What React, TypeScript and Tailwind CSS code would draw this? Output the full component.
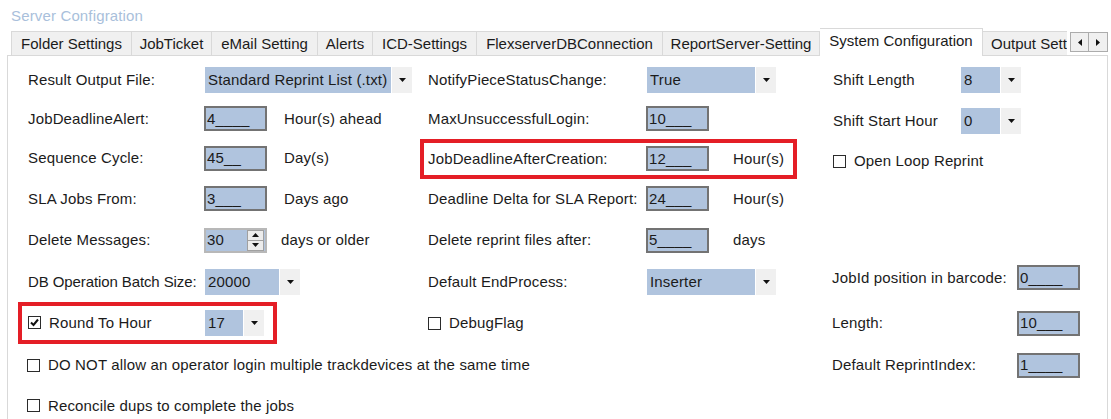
import React from "react";

const txt = "text-[15px] leading-[18px] tracking-[0.15px] text-[#1b1b1b] whitespace-nowrap";

function Tri() {
  return (
    <svg width="7" height="4" viewBox="0 0 7 4">
      <path d="M0 0h7L3.5 4z" fill="#111" />
    </svg>
  );
}

function Box({ v }: { v: string }) {
  return (
    <div className="w-[63px] h-[25px] shrink-0 border-2 border-[#737373] bg-[#b0c4de] flex items-center pl-[1px]">
      <span className={txt}>{v}</span>
    </div>
  );
}

function Combo({ v, w }: { v: string; w: string }) {
  return (
    <div className="flex h-[26px] shrink-0 gap-[1px]">
      <div className={`${w} bg-[#b0c4de] flex items-center pl-[3px]`}>
        <span className={txt}>{v}</span>
      </div>
      <div className="w-[20px] bg-[#f0f0f0] flex items-center justify-center">
        <Tri />
      </div>
    </div>
  );
}

function Check({ checked }: { checked?: boolean }) {
  return (
    <div className="w-[13px] h-[13px] border border-[#2b2b2b] bg-white flex items-center justify-center shrink-0">
      {checked && (
        <svg width="9" height="9" viewBox="0 0 9 9">
          <path d="M1 4.5 L3.5 7 L8 1.5" stroke="#111" strokeWidth="2" fill="none" />
        </svg>
      )}
    </div>
  );
}

function Label({ t, w }: { t: string; w: string }) {
  return <div className={`${w} shrink-0 ${txt}`}>{t}</div>;
}

function Spinner() {
  return (
    <div className="w-[63px] h-[25px] shrink-0 border-2 border-[#b8b8b8] bg-[#b0c4de] flex items-center pl-[1px] justify-between">
      <span className={txt}>30</span>
      <div className="w-[17px] h-[21px] mr-[1px] border border-[#a0a0a0] bg-[#ececec] flex flex-col">
        <div className="flex-1 flex items-center justify-center border-b border-[#a0a0a0]">
          <svg width="7" height="4" viewBox="0 0 7 4">
            <path d="M0 4h7L3.5 0z" fill="#111" />
          </svg>
        </div>
        <div className="flex-1 flex items-center justify-center">
          <Tri />
        </div>
      </div>
    </div>
  );
}

function CheckRow({ t, checked }: { t: string; checked?: boolean }) {
  return (
    <div className="flex items-center gap-[8px]">
      <Check checked={checked} />
      <span className={txt}>{t}</span>
    </div>
  );
}

const tabs: { t: string; w: string }[] = [
  { t: "Folder Settings", w: "w-[121px]" },
  { t: "JobTicket", w: "w-[80px]" },
  { t: "eMail Setting", w: "w-[106px]" },
  { t: "Alerts", w: "w-[55px]" },
  { t: "ICD-Settings", w: "w-[104px]" },
  { t: "FlexserverDBConnection", w: "w-[186px]" },
  { t: "ReportServer-Setting", w: "w-[157px]" },
];

export default function App() {
  return (
    <div className="w-[1111px] h-[419px] bg-white overflow-hidden font-['Liberation_Sans',Arial,sans-serif]">
      <div className="h-[28px] pt-[4px] pl-[11px]">
        <span className="text-[15px] leading-[18px] tracking-[0.15px] text-[#a9bfdb]">Server Configration</span>
      </div>
      <div className="flex items-end h-[27px] pl-[11px] relative">
        {tabs.map((tb, i) => (
          <div
            key={tb.t}
            className={`${tb.w} h-[24px] bg-[#f0f0f0] border-t border-r border-[#d9d9d9] ${i === 0 ? "border-l" : ""} flex items-center justify-center`}
          >
            <span className="text-[15px] leading-[18px] text-[#1b1b1b] whitespace-nowrap">{tb.t}</span>
          </div>
        ))}
        <div className="w-[163px] h-[28px] -mb-px relative z-10 bg-white border-t border-r border-[#d9d9d9] flex items-center justify-center pb-[4px]">
          <span className="text-[15px] leading-[18px] text-[#1b1b1b] whitespace-nowrap">System Configuration</span>
        </div>
        <div className="w-[84px] h-[24px] bg-[#f0f0f0] border-t border-[#d9d9d9] flex items-center pl-[8px] overflow-hidden">
          <span className="text-[15px] leading-[18px] text-[#1b1b1b] whitespace-nowrap">Output Sett</span>
        </div>
        <div className="flex self-start mt-[4px] ml-[3px]">
          <div className="w-[19px] h-[20px] bg-[#f0f0f0] border border-[#acacac] flex items-center justify-center">
            <svg width="4" height="7" viewBox="0 0 4 7">
              <path d="M4 0v7L0 3.5z" fill="#111" />
            </svg>
          </div>
          <div className="w-[19px] h-[20px] bg-[#f0f0f0] border border-l-0 border-[#acacac] flex items-center justify-center">
            <svg width="4" height="7" viewBox="0 0 4 7">
              <path d="M0 0v7L4 3.5z" fill="#111" />
            </svg>
          </div>
        </div>
      </div>
      <div className="ml-[7px] w-[1101px] h-[400px] border border-[#d9d9d9] bg-white pl-[20px] pt-[5px]">
        <div className="grid grid-cols-[400px_405px_260px] grid-rows-[38px_39px_40px_41px_42px_41px_42px_42px_39px]">
          {/* Row 1 */}
          <div className="flex items-center">
            <Label t="Result Output File:" w="w-[177px]" />
            <Combo v="Standard Reprint List (.txt)" w="w-[186px]" />
          </div>
          <div className="flex items-center">
            <Label t="NotifyPieceStatusChange:" w="w-[219px]" />
            <Combo v="True" w="w-[108px]" />
          </div>
          <div className="flex items-center">
            <Label t="Shift Length" w="w-[128px]" />
            <Combo v="8" w="w-[39px]" />
          </div>

          {/* Row 2 */}
          <div className="flex items-center">
            <Label t="JobDeadlineAlert:" w="w-[176px]" />
            <Box v="4____" />
            <span className={`${txt} ml-[17px]`}>Hour(s) ahead</span>
          </div>
          <div className="flex items-center">
            <Label t="MaxUnsuccessfulLogin:" w="w-[218px]" />
            <Box v="10___" />
          </div>
          <div className="flex items-center pt-[5px]">
            <Label t="Shift Start Hour" w="w-[128px]" />
            <Combo v="0" w="w-[39px]" />
          </div>

          {/* Row 3 */}
          <div className="flex items-center">
            <Label t="Sequence Cycle:" w="w-[176px]" />
            <Box v="45__" />
            <span className={`${txt} ml-[17px]`}>Day(s)</span>
          </div>
          <div className="flex items-center">
            <div className="-ml-[8px] w-[377px] h-[40px] mt-[1px] border-4 border-[#e41e26] flex items-center pl-[4px]">
              <Label t="JobDeadlineAfterCreation:" w="w-[218px]" />
              <Box v="12___" />
              <span className={`${txt} ml-[24px]`}>Hour(s)</span>
            </div>
          </div>
          <div className="flex items-center pt-[6px]">
            <CheckRow t="Open Loop Reprint" />
          </div>

          {/* Row 4 */}
          <div className="flex items-center">
            <Label t="SLA Jobs From:" w="w-[176px]" />
            <Box v="3___" />
            <span className={`${txt} ml-[17px]`}>Days ago</span>
          </div>
          <div className="flex items-center">
            <Label t="Deadline Delta for SLA Report:" w="w-[218px]" />
            <Box v="24___" />
            <span className={`${txt} ml-[24px]`}>Hour(s)</span>
          </div>
          <div />

          {/* Row 5 */}
          <div className="flex items-center">
            <Label t="Delete Messages:" w="w-[176px]" />
            <Spinner />
            <span className={`${txt} ml-[14px]`}>days or older</span>
          </div>
          <div className="flex items-center">
            <Label t="Delete reprint files after:" w="w-[218px]" />
            <Box v="5____" />
            <span className={`${txt} ml-[24px]`}>days</span>
          </div>
          <div />

          {/* Row 6 */}
          <div className="flex items-center">
            <div className="w-[177px] shrink-0 text-[15px] leading-[18px] tracking-[-0.1px] text-[#1b1b1b] whitespace-nowrap">
              DB Operation Batch Size:
            </div>
            <Combo v="20000" w="w-[74px]" />
          </div>
          <div className="flex items-center">
            <Label t="Default EndProcess:" w="w-[219px]" />
            <Combo v="Inserter" w="w-[108px]" />
          </div>
          <div className="flex items-center pb-[8px]">
            <Label t="JobId position in barcode:" w="w-[185px] -ml-px" />
            <Box v="0____" />
          </div>

          {/* Row 7 */}
          <div className="flex items-center">
            <div className="-ml-[10px] w-[259px] h-[42px] -mt-px border-4 border-[#e41e26] flex items-center pl-[6px]">
              <div className="w-[177px] flex items-center gap-[8px]">
                <Check checked />
                <span className={txt}>Round To Hour</span>
              </div>
              <Combo v="17" w="w-[38px]" />
            </div>
          </div>
          <div className="flex items-center">
            <CheckRow t="DebugFlag" />
          </div>
          <div className="flex items-center">
            <Label t="Length:" w="w-[185px] -ml-px" />
            <Box v="10___" />
          </div>

          {/* Row 8 */}
          <div className="col-span-2 flex items-center -ml-px">
            <CheckRow t="DO NOT allow an operator login multiple trackdevices at the same time" />
          </div>
          <div className="flex items-center">
            <Label t="Default ReprintIndex:" w="w-[185px] -ml-px" />
            <Box v="1____" />
          </div>

          {/* Row 9 */}
          <div className="col-span-3 flex items-center -ml-px">
            <CheckRow t="Reconcile dups to complete the jobs" />
          </div>
        </div>
      </div>
    </div>
  );
}
